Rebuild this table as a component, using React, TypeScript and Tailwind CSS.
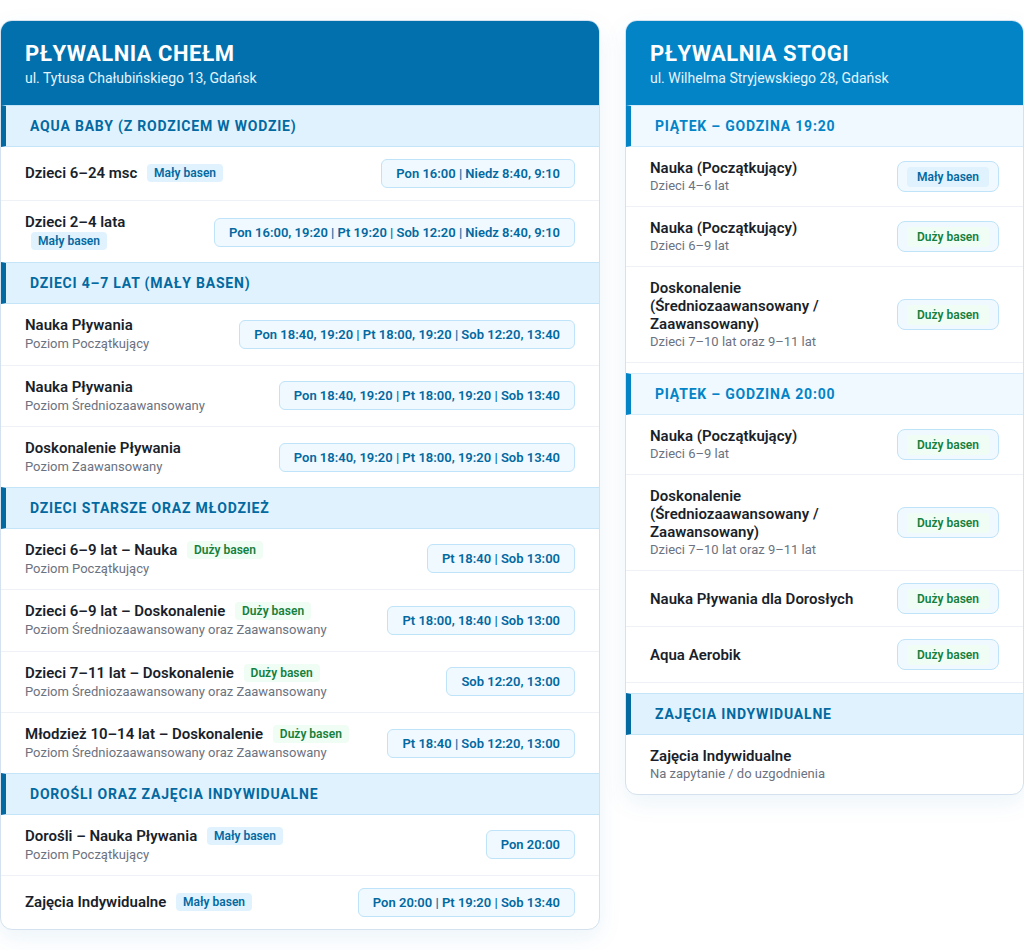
import React from "react";

type Pool = "maly" | "duzy";

interface LeftRow {
  title: string;
  sub?: string;
  pool?: Pool;
  time: string;
}

interface LeftSection {
  name: string;
  rows: LeftRow[];
}

interface RightRow {
  title: string;
  sub?: string;
  pool: Pool;
}

interface RightSection {
  name: string;
  light?: boolean;
  rows: RightRow[];
}

const chelm: LeftSection[] = [
  {
    name: "Aqua Baby (z rodzicem w wodzie)",
    rows: [
      { title: "Dzieci 6–24 msc", pool: "maly", time: "Pon 16:00 | Niedz 8:40, 9:10" },
      { title: "Dzieci 2–4 lata", pool: "maly", time: "Pon 16:00, 19:20 | Pt 19:20 | Sob 12:20 | Niedz 8:40, 9:10" },
    ],
  },
  {
    name: "Dzieci 4–7 lat (Mały basen)",
    rows: [
      { title: "Nauka Pływania", sub: "Poziom Początkujący", time: "Pon 18:40, 19:20 | Pt 18:00, 19:20 | Sob 12:20, 13:40" },
      { title: "Nauka Pływania", sub: "Poziom Średniozaawansowany", time: "Pon 18:40, 19:20 | Pt 18:00, 19:20 | Sob 13:40" },
      { title: "Doskonalenie Pływania", sub: "Poziom Zaawansowany", time: "Pon 18:40, 19:20 | Pt 18:00, 19:20 | Sob 13:40" },
    ],
  },
  {
    name: "Dzieci starsze oraz młodzież",
    rows: [
      { title: "Dzieci 6–9 lat – Nauka", pool: "duzy", sub: "Poziom Początkujący", time: "Pt 18:40 | Sob 13:00" },
      { title: "Dzieci 6–9 lat – Doskonalenie", pool: "duzy", sub: "Poziom Średniozaawansowany oraz Zaawansowany", time: "Pt 18:00, 18:40 | Sob 13:00" },
      { title: "Dzieci 7–11 lat – Doskonalenie", pool: "duzy", sub: "Poziom Średniozaawansowany oraz Zaawansowany", time: "Sob 12:20, 13:00" },
      { title: "Młodzież 10–14 lat – Doskonalenie", pool: "duzy", sub: "Poziom Średniozaawansowany oraz Zaawansowany", time: "Pt 18:40 | Sob 12:20, 13:00" },
    ],
  },
  {
    name: "Dorośli oraz zajęcia indywidualne",
    rows: [
      { title: "Dorośli – Nauka Pływania", pool: "maly", sub: "Poziom Początkujący", time: "Pon 20:00" },
      { title: "Zajęcia Indywidualne", pool: "maly", time: "Pon 20:00 | Pt 19:20 | Sob 13:40" },
    ],
  },
];

const stogi: RightSection[] = [
  {
    name: "Piątek – godzina 19:20",
    light: true,
    rows: [
      { title: "Nauka (Początkujący)", sub: "Dzieci 4–6 lat", pool: "maly" },
      { title: "Nauka (Początkujący)", sub: "Dzieci 6–9 lat", pool: "duzy" },
      { title: "Doskonalenie (Średniozaawansowany / Zaawansowany)", sub: "Dzieci 7–10 lat oraz 9–11 lat", pool: "duzy" },
    ],
  },
  {
    name: "Piątek – godzina 20:00",
    light: true,
    rows: [
      { title: "Nauka (Początkujący)", sub: "Dzieci 6–9 lat", pool: "duzy" },
      { title: "Doskonalenie (Średniozaawansowany / Zaawansowany)", sub: "Dzieci 7–10 lat oraz 9–11 lat", pool: "duzy" },
      { title: "Nauka Pływania dla Dorosłych", pool: "duzy" },
      { title: "Aqua Aerobik", pool: "duzy" },
    ],
  },
];

function Badge({ pool, className = "" }: { pool: Pool; className?: string }) {
  return pool === "maly" ? (
    <span className={`inline-block rounded bg-[#e0f2fe] px-[7px] text-[12px] font-semibold leading-[18px] text-[#0369a1] align-[1px] ${className}`}>
      Mały basen
    </span>
  ) : (
    <span className={`inline-block rounded bg-[#f0fdf4] px-[7px] text-[12px] font-semibold leading-[18px] text-[#15803d] align-[1px] ${className}`}>
      Duży basen
    </span>
  );
}

function Header({ title, address, dark }: { title: string; address: string; dark?: boolean }) {
  return (
    <div className={`px-6 pt-5 pb-[18px] text-white ${dark ? "bg-[#0270ad]" : "bg-[#0284c7]"}`}>
      <h2 className="text-[22px] font-bold uppercase leading-[26px] tracking-[0.5px]">{title}</h2>
      <p className="mt-[1px] text-[14px] leading-[20px] text-[#e6f3fb]">{address}</p>
    </div>
  );
}

function SectionTitle({ name, light }: { name: string; light?: boolean }) {
  return (
    <div
      className={`border-y border-l-[5px] pl-6 py-[11px] text-[14px] font-bold uppercase leading-[18px] tracking-[0.8px] ${
        light
          ? "border-y-[#d6ecfa] border-l-[#0284c7] bg-[#f0f9ff] text-[#0284c7]"
          : "border-y-[#c4e4f8] border-l-[#0369a1] bg-[#e0f2fe] text-[#0369a1]"
      }`}
    >
      {name}
    </div>
  );
}

export default function App() {
  return (
    <div className="min-h-[950px] bg-white font-['Roboto','Liberation_Sans',sans-serif] text-[#1f2937]">
      <div className="flex items-start gap-[25px] pt-5">
        {/* Chełm */}
        <div className="w-[600px] overflow-hidden rounded-xl border border-[#d3e2ee] bg-white shadow-[0_8px_24px_rgba(14,116,180,0.08)]">
          <Header title="Pływalnia Chełm" address="ul. Tytusa Chałubińskiego 13, Gdańsk" dark />
          {chelm.map((section) => (
            <div key={section.name} className="-mt-px first:mt-0">
              <SectionTitle name={section.name} />
              {section.rows.map((row, i) => (
                <div
                  key={i}
                  className={`flex items-center justify-between gap-4 px-6 py-3 ${
                    i < section.rows.length - 1 ? "border-b border-[#eef2f6]" : ""
                  }`}
                >
                  <div className="min-w-0">
                    <div className="text-[15px] font-semibold leading-[19px] text-[#1a1f2b]">
                      {row.title}
                      {row.pool && (
                        <>
                          {" "}
                          <Badge pool={row.pool} className="ml-1.5" />
                        </>
                      )}
                    </div>
                    {row.sub && <div className="mt-[1px] text-[13px] leading-[16.5px] text-[#6b7280]">{row.sub}</div>}
                  </div>
                  <div className="shrink-0 whitespace-nowrap rounded-md border border-[#bfe3f8] bg-[#f0f9ff] px-[14px] py-[5px] text-[13px] font-semibold leading-[17px] text-[#0369a1]">
                    {row.time}
                  </div>
                </div>
              ))}
            </div>
          ))}
        </div>

        {/* Stogi */}
        <div className="w-[399px] overflow-hidden rounded-xl border border-[#d3e2ee] bg-white shadow-[0_8px_24px_rgba(14,116,180,0.08)]">
          <Header title="Pływalnia Stogi" address="ul. Wilhelma Stryjewskiego 28, Gdańsk" />
          {stogi.map((section, si) => (
            <div key={section.name} className={si === 0 ? "-mt-px" : "mt-[10px]"}>
              <SectionTitle name={section.name} light={section.light} />
              {section.rows.map((row, i) => (
                <div key={i} className="flex items-center justify-between gap-4 border-b border-[#eef2f6] px-6 py-3">
                  <div className="min-w-0">
                    <div className="text-[15px] font-semibold leading-[18px] text-[#1a1f2b]">{row.title}</div>
                    {row.sub && <div className="mt-[1px] text-[13px] leading-[16px] text-[#6b7280]">{row.sub}</div>}
                  </div>
                  <div className="flex h-[31px] w-[102px] shrink-0 items-center justify-center rounded-lg border border-[#bfe3f8] bg-[#f0f9ff]">
                    <Badge pool={row.pool} className="px-[10px] leading-[20px]" />
                  </div>
                </div>
              ))}
            </div>
          ))}
          <div className="mt-[10px]">
            <SectionTitle name="Zajęcia indywidualne" />
            <div className="px-6 py-3">
              <div className="text-[15px] font-semibold leading-[18px] text-[#1a1f2b]">Zajęcia Indywidualne</div>
              <div className="mt-[1px] text-[13px] leading-[16px] text-[#6b7280]">Na zapytanie / do uzgodnienia</div>
            </div>
          </div>
        </div>
      </div>
    </div>
  );
}
